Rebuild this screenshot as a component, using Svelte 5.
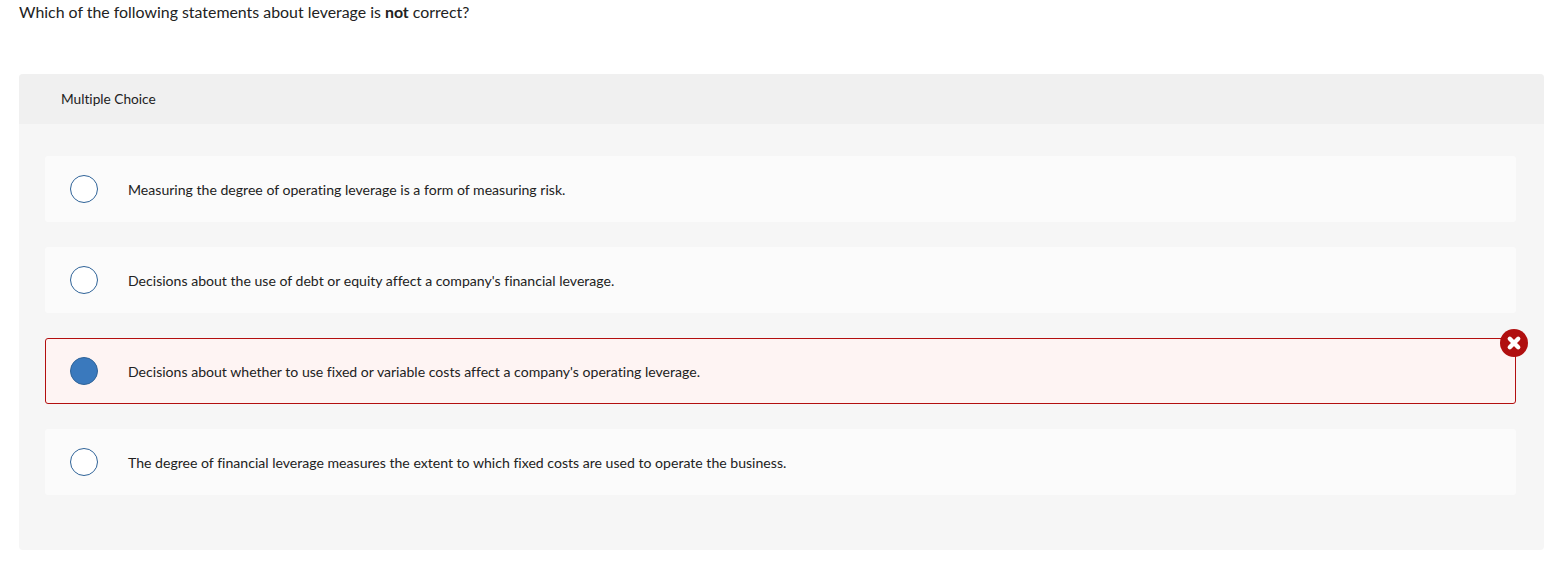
<script>
  const choices = [
    { text: 'Measuring the degree of operating leverage is a form of measuring risk.' },
    { text: "Decisions about the use of debt or equity affect a company's financial leverage." },
    { text: "Decisions about whether to use fixed or variable costs affect a company's operating leverage.", wrong: true },
    { text: 'The degree of financial leverage measures the extent to which fixed costs are used to operate the business.' }
  ];
</script>

<style>
  :global(body) {
    margin: 0;
    background: #fff;
    font-family: Lato, "Open Sans", sans-serif;
    font-variant-ligatures: none;
    color: #222;
  }

  .page {
    padding: 0 18px 0 19px;
  }

  .question {
    margin: 0;
    padding-top: 2px;
    height: 74px;
    box-sizing: border-box;
    font-size: 15.9px;
    line-height: 20px;
  }

  .card {
    background: #f6f6f6;
    border-radius: 4px;
    height: 476px;
  }

  .card-head {
    height: 50px;
    box-sizing: border-box;
    display: flex;
    align-items: center;
    padding: 0 0 2px 42px;
    background: #f0f0f0;
    border-radius: 4px 4px 0 0;
    font-size: 13.7px;
  }

  .choices {
    display: flex;
    flex-direction: column;
    gap: 25px;
    padding: 32px 28px 0 26px;
  }

  .choice {
    position: relative;
    height: 66px;
    box-sizing: border-box;
    display: flex;
    align-items: center;
    gap: 30px;
    padding-left: 25px;
    background: #fbfbfb;
    border-radius: 3px;
    font-size: 14.08px;
  }

  .choice.wrong {
    background: #fef4f3;
    border: 1px solid #b30f0f;
    padding-left: 24px;
  }

  .radio {
    width: 28px;
    height: 28px;
    box-sizing: border-box;
    border: 1.5px solid #2f6398;
    border-radius: 50%;
    background: #fff;
  }

  .wrong .radio {
    background: #3a79bd;
  }

  .badge {
    position: absolute;
    top: -10px;
    right: -13px;
    width: 28px;
    height: 28px;
  }
</style>

<div class="page">
  <p class="question">Which of the following statements about leverage is <strong>not</strong> correct?</p>
  <section class="card">
    <div class="card-head">Multiple Choice</div>
    <div class="choices">
      {#each choices as choice}
        <div class="choice" class:wrong={choice.wrong}>
          <span class="radio"></span>
          <span>{choice.text}</span>
          {#if choice.wrong}
            <svg class="badge" viewBox="0 0 28 28" aria-hidden="true">
              <circle cx="14" cy="14" r="14" fill="#b00f0f" />
              <path d="M9.8 9.8 L18.2 18.2 M18.2 9.8 L9.8 18.2" stroke="#fff" stroke-width="4.4" stroke-linecap="round" />
            </svg>
          {/if}
        </div>
      {/each}
    </div>
  </section>
</div>
